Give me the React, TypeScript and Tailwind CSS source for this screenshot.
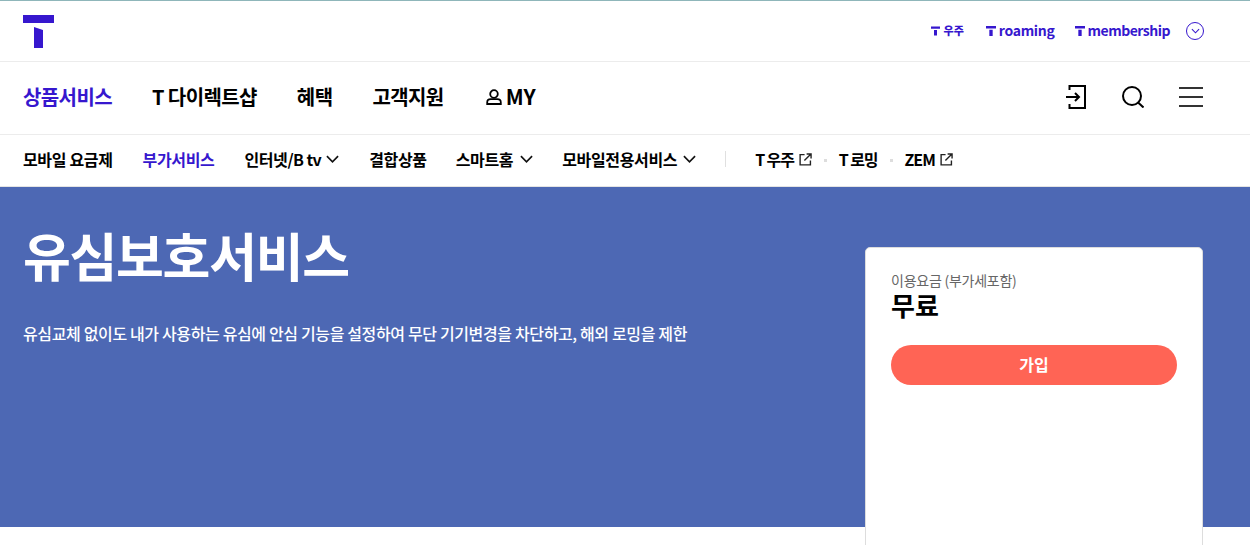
const font = { fontFamily: '"Noto Sans CJK KR", "Noto Sans", sans-serif' };

function TMark({ className }: { className: string }) {
  return (
    <svg viewBox="0 0 12 12" className={className} fill="#3617ce">
      <path d="M0 0h12v3H0zM4 4.500h4V12H4z" />
    </svg>
  );
}

function Chevron({ className }: { className: string }) {
  return (
    <svg viewBox="0 0 14 8" className={className} fill="none" stroke="#111" strokeWidth="1.800">
      <path d="M1 1l6 6 6-6" />
    </svg>
  );
}

function ExternalIcon() {
  return (
    <svg viewBox="0 0 14 14" className="w-[13px] h-[13px] ml-[5px]" fill="none" stroke="#222" strokeWidth="1.500">
      <path d="M6 1.700H1.200v11.100h11.100V8" />
      <path d="M5.800 8.200 12.600 1.400M8.200 1h4.800v4.800" />
    </svg>
  );
}

function Dot() {
  return <span className="w-[3px] h-[3px] bg-[#dddddd] mt-[3px]" />;
}

export default function App() {
  return (
    <div className="relative w-[1250px] h-[545px] overflow-hidden bg-white text-black" style={font}>
      <div className="h-px bg-[#8fb6ba]" />

      <div className="h-[61px] border-b border-[#ececec] pl-[23px] pr-[46px] flex items-center justify-between">
        <svg viewBox="0 0 31 33" className="w-[31px] h-[33px]" fill="#3617ce">
          <path d="M0 0h31v8H0zM11 12l9 3v18h-9z" />
        </svg>
        <div className="flex items-center text-[#3617ce] text-[14px] font-bold tracking-[-0.3px] mb-[1px]">
          <a className="flex items-center gap-[4px]">
            <TMark className="w-[9px] h-[10px]" />
            <span className="text-[11px] font-black tracking-normal">우주</span>
          </a>
          <a className="flex items-center gap-[3px] ml-[22px]">
            <TMark className="w-[10px] h-[10px]" />
            roaming
          </a>
          <a className="flex items-center gap-[3px] ml-[20px]">
            <TMark className="w-[10px] h-[10px]" />
            <span className="tracking-[-0.5px]">membership</span>
          </a>
          <span className="ml-[16px] w-[18px] h-[18px] rounded-full border border-[#3617ce] flex items-center justify-center">
            <svg viewBox="0 0 10 6" className="w-[9px] h-[6px]" fill="none" stroke="#3617ce" strokeWidth="1.200">
              <path d="M1 1l4 4 4-4" />
            </svg>
          </span>
        </div>
      </div>

      <div className="h-[73px] border-b border-[#ececec] pl-[23px] pr-[47px] flex items-center justify-between">
        <nav className="flex items-center gap-[40px] text-[20px] font-bold tracking-[-0.6px] mb-[2px]">
          <a className="text-[#3617ce]">상품서비스</a>
          <a>T 다이렉트샵</a>
          <a>혜택</a>
          <a>고객지원</a>
          <a className="flex items-center gap-[4px] ml-[2px] tracking-normal">
            <svg viewBox="0 0 16 16" className="w-[16px] h-[16px]" fill="none" stroke="#000" strokeWidth="1.800">
              <circle cx="8" cy="5" r="3.800" />
              <path d="M1.200 15v-1.500c0-2 1.500-3.300 3.500-3.300h6.600c2 0 3.500 1.300 3.500 3.300V15z" />
            </svg>
            <span className="text-[21px]">MY</span>
          </a>
        </nav>
        <div className="flex items-center mb-[2px]">
          <svg viewBox="0 0 20 24" className="w-[20px] h-[24px]" fill="none" stroke="#000" strokeWidth="2">
            <path d="M3.500 5V1h15.500v22H3.500v-4" />
            <path d="M0 12h13M9 8l4 4-4 4" />
          </svg>
          <svg viewBox="0 0 22 22" className="ml-[36px] w-[22px] h-[22px]" fill="none" stroke="#000" strokeWidth="2">
            <circle cx="10" cy="10" r="9" />
            <path d="M15.500 16 21.500 21.500" />
          </svg>
          <div className="ml-[35px] w-[24px] flex flex-col gap-[7px]">
            <span className="h-[2px] bg-[#333]" />
            <span className="h-[2px] bg-[#333]" />
            <span className="h-[2px] bg-[#333]" />
          </div>
        </div>
      </div>

      <div className="h-[52px] border-b border-[#e4e4e4] pl-[23px] flex items-center text-[16px] font-bold tracking-[-0.35px]">
        <div className="flex items-center mb-[3px]">
          <a>모바일 요금제</a>
          <a className="ml-[30px] text-[#3617ce]">부가서비스</a>
          <a className="ml-[30px] flex items-center">
            <span>
              인터넷<span className="tracking-[-0.6px]">/B tv</span>
            </span>
            <Chevron className="w-[13px] h-[8px] ml-[5px]" />
          </a>
          <a className="ml-[30px]">결합상품</a>
          <a className="ml-[29px] flex items-center">
            스마트홈
            <Chevron className="w-[13px] h-[8px] ml-[7px]" />
          </a>
          <a className="ml-[29px] flex items-center">
            모바일전용서비스
            <Chevron className="w-[13px] h-[8px] ml-[6px]" />
          </a>
          <span className="ml-[29px] w-px h-[16px] bg-[#e0e0e0]" />
          <div className="ml-[29px] flex items-center gap-[12px]">
            <a className="flex items-center tracking-[-1.100px]">
              T 우주
              <ExternalIcon />
            </a>
            <Dot />
            <a className="tracking-[-1.100px]">T 로밍</a>
            <Dot />
            <a className="flex items-center tracking-[-1px]">
              ZEM
              <ExternalIcon />
            </a>
          </div>
        </div>
      </div>

      <div className="h-[340px] bg-[#4d68b4] pl-[23px] pt-[32px] text-white">
        <h1 className="text-[52px] leading-[72px] font-bold tracking-[-1.300px]">유심보호서비스</h1>
        <p className="mt-[31px] text-[16px] leading-[22px] font-medium tracking-[-0.36px]">
          유심교체 없이도 내가 사용하는 유심에 안심 기능을 설정하여 무단 기기변경을 차단하고, 해외 로밍을 제한
        </p>
      </div>

      <aside className="absolute left-[865px] top-[247px] w-[338px] h-[310px] bg-white border border-[#dddddd] rounded-[5px] px-[25px] pt-[23px]">
        <p className="text-[14px] leading-[18px] text-[#666666] tracking-[-0.25px]">이용요금 (부가세포함)</p>
        <p className="text-[26px] leading-[32px] font-bold">무료</p>
        <button className="mt-[24px] w-full h-[40px] rounded-full bg-[#ff6455] text-white text-[16px] font-bold">
          <span className="relative -top-[1px]">가입</span>
        </button>
      </aside>
    </div>
  );
}
